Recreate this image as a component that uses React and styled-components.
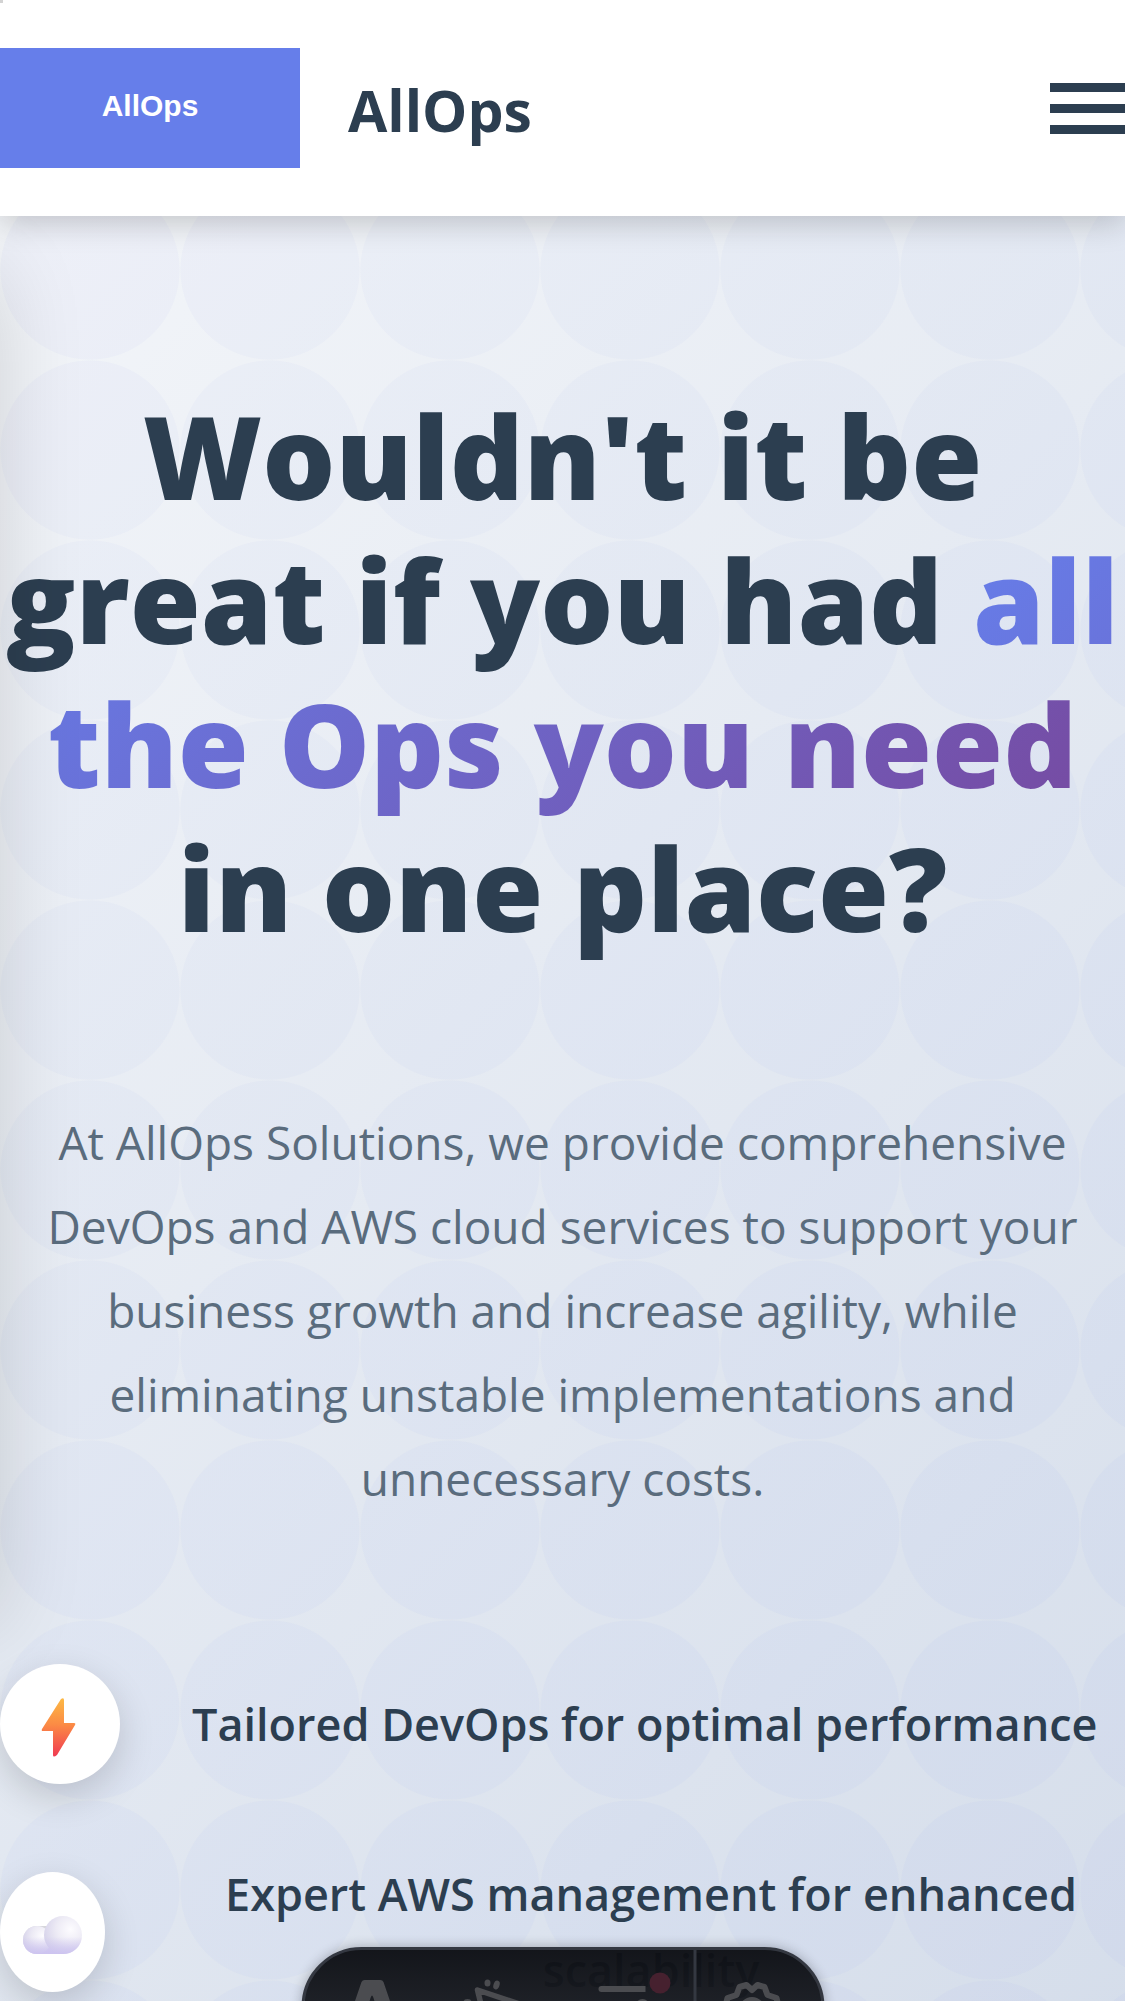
import React from "react";
import styled, { createGlobalStyle } from "styled-components";

const Global = createGlobalStyle`
  *, *::before, *::after { box-sizing: border-box; }
  html, body, #root { height: 100%; }
  body { margin: 0; overflow: hidden; font-family: "Open Sans", "Noto Sans", sans-serif; color: #2c3e50; }
`;
const Page = styled.div`
  position: relative;
  height: 100%;
  overflow: hidden;
`;
const Header = styled.header`
  position: relative;
  z-index: 3;
  display: flex;
  align-items: center;
  justify-content: space-between;
  padding: 48px 0;
  background: #fff;
  box-shadow: 0 6px 30px rgba(0, 0, 0, 0.2);
`;
const Brand = styled.a`
  display: flex;
  align-items: center;
  gap: 48px;
  color: inherit;
  text-decoration: none;
`;
const LogoTile = styled.span`
  display: flex;
  align-items: center;
  justify-content: center;
  width: 300px;
  height: 120px;
  padding-bottom: 4px;
  background: #667eea;
  color: #fff;
  font: bold 30px "Liberation Sans", sans-serif;
`;
const BrandName = styled.span`
  padding-top: 4px;
  font-size: 57px;
  line-height: 72px;
  font-weight: 700;
`;
const MenuButton = styled.button`
  display: flex;
  flex-direction: column;
  gap: 12px;
  width: 75px;
  padding: 0;
  border: 0;
  background: none;
`;
const Bar = styled.span`
  height: 9px;
  background: #2c3e50;
`;
const Drawer = styled.nav`
  position: absolute;
  z-index: 2;
  right: 100%;
  top: 240px;
  width: 100%;
  height: 1350px;
  box-shadow: 0 30px 81px rgba(0, 0, 0, 0.14);
`;
const SkipMark = styled.span`
  position: absolute;
  z-index: 4;
  top: 0;
  left: 0;
  width: 3px;
  height: 3px;
  background: #d3d3d3;
`;
const Hero = styled.main`
  position: relative;
  margin-top: -216px;
  padding-top: 384px;
  min-height: 3800px;
  text-align: center;
  background:
    radial-gradient(circle, rgba(102, 126, 234, 0.04) 89px, transparent 90px) 0 0 / 180px 180px,
    linear-gradient(135deg, #f5f7fa 0%, #c3cfe2 100%);
`;
const Title = styled.h1`
  margin: 0 0 140px;
  font-size: 115px;
  line-height: 144px;
  font-weight: 800;
  white-space: nowrap;
`;
const Accent = styled.span`
  background: linear-gradient(135deg, #667eea 0%, #764ba2 100%);
  background-clip: text;
  -webkit-background-clip: text;
  color: transparent;
`;
const Lead = styled.p`
  margin: 0 0 144px;
  padding: 0 36px;
  color: #5a6c7d;
  font-size: 46px;
  line-height: 84px;
`;
const Features = styled.ul`
  display: grid;
  gap: 72px;
  margin: 0;
  padding: 0;
  list-style: none;
`;
const Feature = styled.li`
  display: flex;
  align-items: center;
  gap: 72px;
`;
const Badge = styled.span`
  flex: 0 0 ${(p) => p.$width}px;
  height: 120px;
  border-radius: 50%;
  background: #fff;
  box-shadow: 0 12px 36px rgba(0, 0, 0, 0.16);
  svg { display: block; width: 100%; height: 100%; }
`;
const FeatureText = styled.span`
  font-size: 45px;
  line-height: 76px;
  font-weight: 600;
`;
const Toolbar = styled.div`
  position: absolute;
  z-index: 5;
  left: 50%;
  bottom: -66px;
  transform: translateX(-50%);
  display: flex;
  height: 120px;
  overflow: hidden;
  border: 3px solid #343841;
  border-radius: 60px;
  background: linear-gradient(180deg, rgba(13, 15, 20, 0.97) 0%, rgba(36, 39, 46, 0.97) 100%);
  box-shadow: 0 0 12px rgba(19, 21, 26, 0.3);
`;
const Tool = styled.button`
  width: ${(p) => p.$width}px;
  padding: 0;
  border: 0;
  border-left: ${(p) => (p.$divided ? "3px solid #343841" : "0")};
  background: none;
  color: #4b4c50;
  svg { display: block; }
`;

function Bolt() {
  return (
    <svg viewBox="0 0 120 120" aria-hidden="true">
      <defs>
        <linearGradient id="bolt" x1="0" y1="0" x2="0" y2="1">
          <stop offset="0" stopColor="#fdb944" />
          <stop offset="0.45" stopColor="#fb8b45" />
          <stop offset="1" stopColor="#f03a52" />
        </linearGradient>
      </defs>
      <path d="M61 35Q64 33 64 36V59H74Q76 59 75 61L57 91Q53 94 53 91V67H43Q41 67 42 65Z" fill="url(#bolt)" />
    </svg>
  );
}

function Cloud() {
  return (
    <svg viewBox="0 0 105 120" aria-hidden="true">
      <defs>
        <radialGradient id="puff" cx="0.7" cy="0.35" r="0.75">
          <stop offset="0" stopColor="#fdfcff" />
          <stop offset="0.5" stopColor="#edebf5" />
          <stop offset="1" stopColor="#d6d2ea" />
        </radialGradient>
        <linearGradient id="base" x1="0" y1="0" x2="0" y2="1">
          <stop offset="0" stopColor="#d6d6da" />
          <stop offset="0.5" stopColor="#edeaf7" />
          <stop offset="1" stopColor="#cdc4f0" />
        </linearGradient>
        <linearGradient id="tint" x1="0" y1="0" x2="0" y2="1">
          <stop offset="0.55" stopColor="#cdc4f0" stopOpacity="0" />
          <stop offset="1" stopColor="#cdc4f0" />
        </linearGradient>
      </defs>
      <circle cx="44" cy="64" r="8" fill="#d9d9dc" />
      <path d="M37 54a14 14 0 0 0 0 28h26V54Z" fill="url(#base)" />
      <circle cx="37" cy="68" r="14" fill="url(#puff)" />
      <circle cx="63" cy="63" r="19" fill="url(#puff)" />
      <path d="M37 54a14 14 0 0 0 0 28h26a19 19 0 1 0-17-27Z" fill="url(#tint)" />
    </svg>
  );
}

export default function App() {
  return (
    <Page>
      <Global />
      <Header>
        <Brand href="#home"><LogoTile>AllOps</LogoTile><BrandName>AllOps</BrandName></Brand>
        <MenuButton type="button" aria-label="Menu"><Bar /><Bar /><Bar /></MenuButton>
      </Header>
      <SkipMark />
      <Drawer />
      <Hero>
        <Title>
          Wouldn't it be<br />great if you had <Accent>all<br />the Ops you need</Accent><br />in one place?
        </Title>
        <Lead>
          At AllOps Solutions, we provide comprehensive DevOps and AWS cloud services to support your business
          growth and increase agility, while eliminating unstable implementations and unnecessary costs.
        </Lead>
        <Features>
          <Feature><Badge $width={120}><Bolt /></Badge><FeatureText>Tailored DevOps for optimal performance</FeatureText></Feature>
          <Feature><Badge $width={105}><Cloud /></Badge><FeatureText>Expert AWS management for enhanced scalability</FeatureText></Feature>
        </Features>
      </Hero>
      <Toolbar>
        <Tool type="button" aria-label="Menu" $width={130}>
          <svg width="130" height="114" viewBox="0 -10 130 114">
            <path d="M60 20h16q2 0 3 2l24 70H86L69 38q-1.500-5-3 0L50 92H33l24-70q1-2 3-2z" fill="currentColor" />
          </svg>
        </Tool>
        <Tool type="button" aria-label="Inspect" $width={130}>
          <svg width="130" height="114" viewBox="0 -10 130 114" fill="currentColor">
            <ellipse cx="53" cy="23" rx="3" ry="3.500" />
            <ellipse cx="62" cy="25" rx="3" ry="4.500" transform="rotate(20 62 25)" />
            <ellipse cx="33" cy="42" rx="4" ry="3" />
            <path d="M43 30L85 44L64 54L54 75Z" fill="none" stroke="currentColor" strokeWidth="5.500" strokeLinejoin="round" />
          </svg>
        </Tool>
        <Tool type="button" aria-label="Audit" $width={129}>
          <svg width="129" height="114" viewBox="0 -10 129 114" fill="currentColor">
            <path d="M81 26H37a3 3 0 0 0 0 6H81Z" />
            <circle cx="78" cy="46" r="7" />
            <circle cx="95.500" cy="23" r="10.500" fill="#46212f" />
          </svg>
        </Tool>
        <Tool type="button" aria-label="Settings" $width={128} $divided>
          <svg width="125" height="114" viewBox="0 -10 125 114" fill="none" stroke="currentColor" strokeWidth="6" strokeLinejoin="round">
            <path d="M29 46L31 38L40 35L43 27L50 25L55.500 30L61 25L68 27L71 35L80 38L82 46" />
            <circle cx="55.500" cy="50" r="10" />
          </svg>
        </Tool>
      </Toolbar>
    </Page>
  );
}
